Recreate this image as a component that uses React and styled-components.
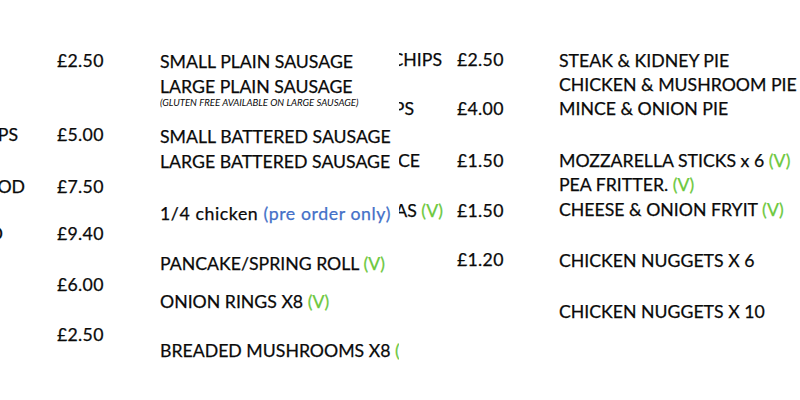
import React from 'react';
import styled, { createGlobalStyle } from 'styled-components';

const LINE = 25;

/* each row is placed by the y of its centre, margins are worked out from that */
const withGaps = (rows) => {
  let bottom = 0;
  return rows.map((r) => {
    const h = r.h || LINE;
    const top = r.y - h / 2;
    const out = { ...r, mt: top - bottom, h };
    bottom = top + h;
    return out;
  });
};

const leftPrices = [
  { y: 60, name: 'CHIPS', pad: 39, price: '£2.50', hide: true },
  { y: 134, name: 'LARGE CHIPS', pad: 39, price: '£5.00' },
  { y: 186, name: 'SMALL COD', pad: 32, price: '£7.50' },
  { y: 233, name: 'LARGE COD', pad: 54, price: '£9.40' },
  { y: 284, name: '', pad: 0, price: '£6.00' },
  { y: 334, name: '', pad: 0, price: '£2.50' },
];

const sausages = [
  { y: 61, text: 'SMALL PLAIN SAUSAGE' },
  { y: 86, text: 'LARGE PLAIN SAUSAGE' },
  { y: 103, h: 12, note: '(GLUTEN FREE AVAILABLE ON LARGE SAUSAGE)' },
  { y: 136, text: 'SMALL BATTERED SAUSAGE' },
  { y: 161, text: 'LARGE BATTERED SAUSAGE' },
  { y: 213, text: '1/4 chicken', blue: '(pre order only)', loose: true },
  { y: 263, text: 'PANCAKE/SPRING ROLL', veg: true },
  { y: 301, text: 'ONION RINGS X8', veg: true },
  { y: 350, text: 'BREADED MUSHROOMS X8', veg: true },
];

const sides = [
  { y: 59, name: 'CHIPS', pad: 15, price: '£2.50' },
  { y: 108, name: 'PS', pad: 43, price: '£4.00' },
  { y: 160, name: 'CE', pad: 37, price: '£1.50' },
  { y: 210, name: 'PEAS', veg: true, pad: 14, price: '£1.50' },
  { y: 259, name: '', pad: 0, price: '£1.20' },
];

const pies = [
  { y: 60, text: 'STEAK & KIDNEY PIE' },
  { y: 84, text: 'CHICKEN & MUSHROOM PIE' },
  { y: 108, text: 'MINCE & ONION PIE' },
  { y: 160, text: 'MOZZARELLA STICKS x 6', veg: true },
  { y: 184, text: 'PEA FRITTER.', veg: true },
  { y: 209, text: 'CHEESE & ONION FRYIT', veg: true },
  { y: 260, text: 'CHICKEN NUGGETS X 6' },
  { y: 311, text: 'CHICKEN NUGGETS X 10' },
];

const Global = createGlobalStyle`
  body {
    margin: 0;
    background: #fff;
    font-family: Lato, "Open Sans", sans-serif;
    color: #0a0a0a;
  }
`;

const Menu = styled.div`
  display: flex;
  width: 800px;
  height: 400px;
  overflow: hidden;
  background: #fff;
`;

const Column = styled.div`
  display: flex;
  flex-direction: column;
  flex-shrink: 0;
  width: ${(p) => p.$w}px;
  overflow: hidden;
`;

const PriceRow = styled.div`
  display: flex;
  align-items: center;
  height: ${LINE}px;
  margin-top: ${(p) => p.$mt}px;
  font-size: 17.7px;
  white-space: nowrap;
  -webkit-text-stroke: 0.25px #0a0a0a;
`;

const Name = styled.div`
  display: flex;
  justify-content: flex-end;
  flex-shrink: 0;
  width: ${(p) => p.$w}px;
  padding-right: ${(p) => p.$pad}px;
  box-sizing: border-box;
  overflow: hidden;
`;

const Price = styled.span`
  letter-spacing: 0.3px;
`;

const Line = styled.div`
  height: ${(p) => p.$h}px;
  line-height: ${(p) => p.$h}px;
  margin-top: ${(p) => p.$mt}px;
  font-size: 17.7px;
  letter-spacing: ${(p) => (p.$loose ? '0.6px' : '0')};
  white-space: nowrap;
  -webkit-text-stroke: 0.25px #0a0a0a;
`;

const Note = styled(Line)`
  font-size: 9.6px;
  font-style: italic;
  -webkit-text-stroke: 0;
`;

const Veg = styled.span`
  color: #6cc83c;
  -webkit-text-stroke: 0.25px #6cc83c;
`;

const Blue = styled.span`
  color: #4470c8;
  -webkit-text-stroke: 0.25px #4470c8;
`;

function Item({ r }) {
  if (r.note) return <Note $h={r.h} $mt={r.mt}>{r.note}</Note>;
  return (
    <Line $h={r.h} $mt={r.mt} $loose={r.loose}>
      {r.text}
      {r.blue && <> <Blue>{r.blue}</Blue></>}
      {r.veg && <> <Veg>(V)</Veg></>}
    </Line>
  );
}

function Priced({ r, nameW }) {
  return (
    <PriceRow $mt={r.mt}>
      <Name $w={nameW} $pad={r.pad}>
        {!r.hide && r.name}
        {r.veg && <>&nbsp;<Veg>(V)</Veg></>}
      </Name>
      <Price>{r.price}</Price>
    </PriceRow>
  );
}

export default function App() {
  return (
    <>
      <Global />
      <Menu>
        <Column $w={160}>
          {withGaps(leftPrices).map((r, i) => <Priced key={i} r={r} nameW={57} />)}
        </Column>
        <Column $w={239}>
          {withGaps(sausages).map((r, i) => <Item key={i} r={r} />)}
        </Column>
        <Column $w={160}>
          {withGaps(sides).map((r, i) => <Priced key={i} r={r} nameW={58} />)}
        </Column>
        <Column $w={241}>
          {withGaps(pies).map((r, i) => <Item key={i} r={r} />)}
        </Column>
      </Menu>
    </>
  );
}
